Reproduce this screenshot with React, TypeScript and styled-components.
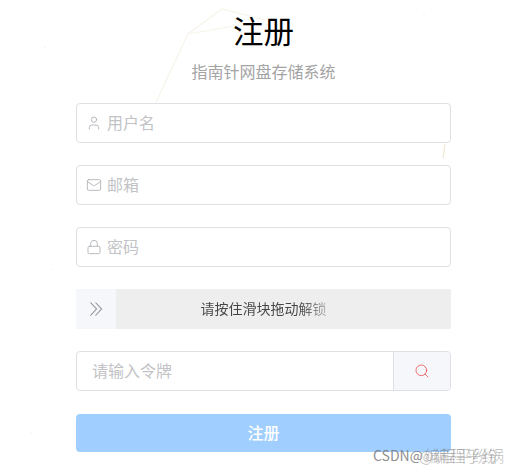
import React from "react";
import styled, { createGlobalStyle } from "styled-components";
import { User, Mail, Lock, Search } from "lucide-react";

const Global = createGlobalStyle`
  html, body { margin: 0; padding: 0; background: #fff; }
  body { font-family: "Noto Sans CJK SC", "Liberation Sans", sans-serif; }
  input::placeholder { color: #c2c3c6; opacity: 1; }
`;

const Page = styled.div`
  position: relative;
  width: 518px;
  height: 472px;
  overflow: hidden;
  background: #fff;
`;

const Backdrop = styled.svg`
  position: absolute;
  inset: 0;
  pointer-events: none;
`;

const Form = styled.main`
  position: relative;
  width: 375px;
  margin-left: 76px;
  display: flex;
  flex-direction: column;
`;

const Title = styled.h1`
  margin: 8px 0 0;
  height: 44px;
  font-size: 30.5px;
  line-height: 44px;
  font-weight: 400;
  color: #000;
  text-align: center;
`;

const Subtitle = styled.p`
  margin: 7px 0 20px;
  height: 24px;
  font-size: 16px;
  line-height: 24px;
  color: #a3a3a3;
  text-align: center;
`;

const Field = styled.label`
  box-sizing: border-box;
  height: 40px;
  margin-bottom: 22px;
  padding: 0 9px;
  display: flex;
  align-items: center;
  gap: 5px;
  border: 1px solid #dfe0e3;
  border-radius: 4px;
  background: #fff;
  color: #b4b6ba;
`;

const TextInput = styled.input`
  flex: 1;
  min-width: 0;
  border: 0;
  outline: 0;
  padding: 0 0 2px;
  background: transparent;
  font: inherit;
  font-size: 16px;
`;

const Slider = styled.div`
  height: 40px;
  margin-bottom: 22px;
  display: flex;
  align-items: center;
  background: #eeeeee;
  border-radius: 2px;
  font-size: 14px;
`;

const Handle = styled.div`
  width: 40px;
  height: 40px;
  flex: none;
  display: flex;
  align-items: center;
  justify-content: center;
  background: #f5f7fa;
  color: #8c8f94;
`;

const SliderText = styled.div`
  flex: 1;
  padding: 0 40px 2px 0;
  text-align: center;
`;

const FadingLabel = styled.span`
  display: inline-block;
  background: linear-gradient(90deg, #444 0 78%, #b5b5b5 100%);
  -webkit-background-clip: text;
  background-clip: text;
  color: transparent;
`;

const TokenRow = styled.div`
  box-sizing: border-box;
  height: 40px;
  margin-bottom: 23px;
  display: flex;
  border: 1px solid #dfe0e3;
  border-radius: 4px;
  overflow: hidden;
`;

const TokenInput = styled(TextInput)`
  padding: 0 15px 2px;
`;

const TokenAddon = styled.div`
  width: 56px;
  flex: none;
  display: flex;
  align-items: center;
  justify-content: center;
  background: #f5f7fa;
  border-left: 1px solid #dfe0e3;
  color: #f04b4b;
`;

const Submit = styled.button`
  height: 38px;
  padding: 0 0 3px;
  border: 0;
  border-radius: 4px;
  background: #a0cfff;
  color: #fff;
  font: inherit;
  font-size: 16px;
  font-weight: 500;
`;

const Watermark = styled.div`
  position: absolute;
  left: 373px;
  top: 446px;
  height: 18px;
  width: 140px;
  font-size: 14px;
  line-height: 18px;
  white-space: nowrap;
  color: rgba(120, 120, 120, 0.85);
`;

const Ghost = styled.span<{ $left: number }>`
  position: absolute;
  left: ${(p) => p.$left}px;
  top: 0;
  font-size: 16px;
  font-weight: 300;
  color: rgba(120, 120, 120, 0.5);
`;

export default function App() {
  return (
    <Page>
      <Global />
      <Backdrop width="518" height="472" fill="none">
        <g stroke="#f6f4ea" strokeWidth="1.2">
          <path d="M156 102 L188 34 L222 9 L265 20" />
          <path d="M188 34 L240 25" />
          <path d="M445 144 L443 158" stroke="#ece8cf" />
        </g>
        <g fill="#e4e4e4">
          <circle cx="45" cy="47" r="0.6" />
          <circle cx="52" cy="269" r="0.6" />
          <circle cx="31" cy="433" r="0.6" />
          <circle cx="424" cy="15" r="0.6" />
        </g>
      </Backdrop>
      <Form>
        <Title>注册</Title>
        <Subtitle>指南针网盘存储系统</Subtitle>
        <Field>
          <User size={16} strokeWidth={1.4} />
          <TextInput placeholder="用户名" />
        </Field>
        <Field>
          <Mail size={16} strokeWidth={1.4} />
          <TextInput placeholder="邮箱" />
        </Field>
        <Field>
          <Lock size={16} strokeWidth={1.4} />
          <TextInput placeholder="密码" />
        </Field>
        <Slider>
          <Handle>
            <svg width="14" height="16" viewBox="0 0 14 16" fill="none" stroke="currentColor" strokeWidth="1.1">
              <path d="M1.5 1.5 L7.5 8 L1.5 14.5" />
              <path d="M6.5 1.5 L12.5 8 L6.5 14.5" />
            </svg>
          </Handle>
          <SliderText>
            <FadingLabel>请按住滑块拖动解锁</FadingLabel>
          </SliderText>
        </Slider>
        <TokenRow>
          <TokenInput placeholder="请输入令牌" />
          <TokenAddon>
            <Search size={16} strokeWidth={1.2} />
          </TokenAddon>
        </TokenRow>
        <Submit type="button">注册</Submit>
      </Form>
      <Watermark>
        CSDN@
        <Ghost $left={46}>@编程乎纷</Ghost>
        <Ghost $left={51}>编程平纷锅</Ghost>
      </Watermark>
    </Page>
  );
}
